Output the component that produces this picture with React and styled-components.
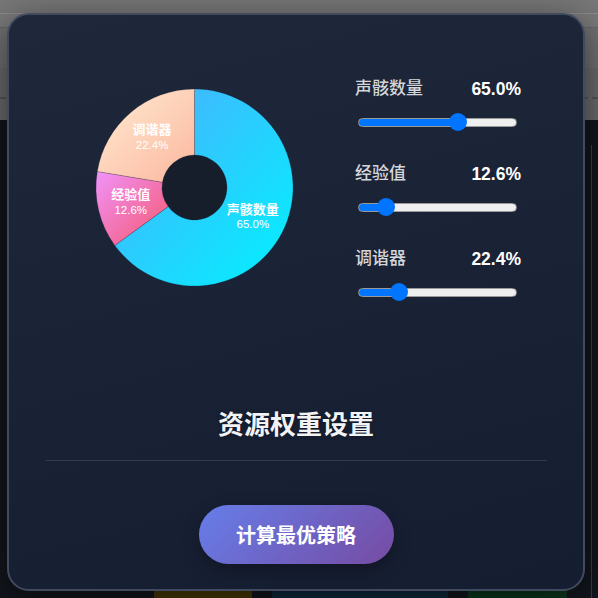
import React, { useState } from "react";
import styled, { createGlobalStyle } from "styled-components";

const Global = createGlobalStyle`
  html, body { margin: 0; padding: 0; background: #12171e; overflow: hidden; }
  * { box-sizing: border-box; }
`;

const FONT = `"Liberation Sans", "Noto Sans CJK SC", sans-serif`;

const Page = styled.div`
  position: relative;
  width: 598px;
  height: 598px;
  overflow: hidden;
  display: flex;
  flex-direction: column;
  font-family: ${FONT};
`;

const Header = styled.div`
  height: 120px;
  display: flex;
  flex-direction: column;
  background: #6c6c6c;
`;

const Strip = styled.div`
  height: ${(p) => p.$h}px;
  background: ${(p) => p.$bg};
  border-top: ${(p) => (p.$line ? `1px solid ${p.$line}` : "none")};
`;

const DashStrip = styled.div`
  flex: 1;
  padding-top: 29px;
  background: #6c6c6c;
`;

const Dashed = styled.div`
  border-top: 2px dashed #565656;
`;

const Body = styled.div`
  flex: 1;
  display: flex;
  background: #12171e;
`;

const Main = styled.div`
  flex: 1;
  display: flex;
  flex-direction: column;
  justify-content: flex-end;
`;

const Tabs = styled.div`
  display: flex;
  gap: 20px;
  padding-left: 154px;
  height: 8px;
`;

const Tab = styled.div`
  width: ${(p) => p.$w}px;
  background: ${(p) => p.$bg};
`;

const SideRail = styled.div`
  width: 7px;
  margin-top: 25px;
  border-left: 1px solid #3a3f45;
`;

const Modal = styled.div`
  position: absolute;
  left: 7px;
  top: 13px;
  width: 578px;
  height: 578px;
  border: 2px solid #414a5f;
  border-radius: 22px;
  background: linear-gradient(165deg, #1f273b 0%, #1a2236 50%, #151d31 100%);
  box-shadow: 0 10px 40px rgba(0, 0, 0, 0.55);
  display: flex;
  flex-direction: column;
  align-items: stretch;
`;

const TopSection = styled.div`
  display: flex;
  align-items: flex-start;
  padding: 62px 0 0 85px;
`;

const PieSvg = styled.svg`
  margin-top: 10px;
  flex: none;
  overflow: visible;
`;

const Sliders = styled.div`
  margin-left: 60px;
  width: 166px;
  display: flex;
  flex-direction: column;
  gap: 31px;
`;

const SliderRow = styled.div`
  display: flex;
  flex-direction: column;
`;

const LabelLine = styled.div`
  display: flex;
  justify-content: space-between;
  align-items: center;
  height: 24px;
`;

const SliderLabel = styled.span`
  font-size: 17px;
  font-weight: 500;
  color: #d4d6da;
  line-height: 24px;
`;

const SliderValue = styled.span`
  font-size: 17.5px;
  font-weight: 700;
  color: #ffffff;
  line-height: 24px;
`;

const Range = styled.input`
  -webkit-appearance: none;
  appearance: none;
  width: 159px;
  height: 18px;
  margin: 12px 0 0 3px;
  padding: 0;
  background: transparent;
  display: block;
  cursor: pointer;

  &::-webkit-slider-runnable-track {
    height: 9px;
    border-radius: 5px;
    border: 1px solid #9a9a9a;
    background: linear-gradient(
      to right,
      #0075ff 0,
      #0075ff var(--fill),
      #efefef var(--fill),
      #efefef 100%
    );
  }
  &::-webkit-slider-thumb {
    -webkit-appearance: none;
    appearance: none;
    width: 18px;
    height: 18px;
    border-radius: 50%;
    background: #0075ff;
    border: none;
    margin-top: -5.5px;
  }
  &:focus {
    outline: none;
  }
`;

const Title = styled.h2`
  margin: 108px 0 0;
  text-align: center;
  font-size: 26px;
  line-height: 32px;
  font-weight: 600;
  color: #f2f3f5;
  text-shadow: 0 1px 4px rgba(0, 0, 0, 0.35);
`;

const Divider = styled.div`
  margin: 19px 36px 0 37px;
  height: 1px;
  background: #323c50;
`;

const ButtonRow = styled.div`
  display: flex;
  justify-content: center;
  margin-top: 44px;
`;

const ActionButton = styled.button`
  width: 195px;
  height: 59px;
  border: none;
  border-radius: 30px;
  background: linear-gradient(135deg, #667eea 0%, #764ba2 100%);
  color: #ffffff;
  font-family: ${FONT};
  font-size: 20px;
  font-weight: 700;
  box-shadow: 0 6px 18px rgba(0, 0, 0, 0.3);
  cursor: pointer;
`;

const SliceName = styled.text`
  font-family: ${FONT};
  font-size: 13px;
  font-weight: 700;
  fill: #ffffff;
`;

const SliceValue = styled.text`
  font-family: ${FONT};
  font-size: 11.5px;
  fill: #ffffff;
`;

const INITIAL = [
  { key: "a", name: "声骸数量", value: 65.0, grad: ["#4facfe", "#00f2fe"] },
  { key: "b", name: "经验值", value: 12.6, grad: ["#f093fb", "#f5576c"] },
  { key: "c", name: "调谐器", value: 22.4, grad: ["#ffecd2", "#fcb69f"] },
];

const CX = 100.5;
const CY = 100.5;
const R = 98.5;
const RI = 32.5;

function pt(angle, rad) {
  return [CX + rad * Math.sin(angle), CY - rad * Math.cos(angle)];
}

function arcPath(a0, a1) {
  const large = a1 - a0 > Math.PI ? 1 : 0;
  const [x0, y0] = pt(a0, R);
  const [x1, y1] = pt(a1, R);
  const [x2, y2] = pt(a1, RI);
  const [x3, y3] = pt(a0, RI);
  return `M${x0} ${y0} A${R} ${R} 0 ${large} 1 ${x1} ${y1} L${x2} ${y2} A${RI} ${RI} 0 ${large} 0 ${x3} ${y3} Z`;
}

function Donut({ items }) {
  const total = items.reduce((s, d) => s + d.value, 0) || 1;
  let acc = 0;
  const slices = items.map((d) => {
    const a0 = (acc / total) * Math.PI * 2;
    acc += d.value;
    const a1 = (acc / total) * Math.PI * 2;
    const mid = (a0 + a1) / 2;
    const [lx, ly] = pt(mid, (R + RI) / 2);
    return { ...d, a0, a1, lx, ly, pct: (d.value / total) * 100 };
  });
  return (
    <PieSvg width="201" height="201" viewBox="0 0 201 201">
      <defs>
        {slices.map((s) => (
          <linearGradient key={s.key} id={`g-${s.key}`} x1="0" y1="0" x2="1" y2="1">
            <stop offset="0" stopColor={s.grad[0]} />
            <stop offset="1" stopColor={s.grad[1]} />
          </linearGradient>
        ))}
      </defs>
      <circle cx={CX} cy={CY} r={RI} fill="#161d2b" />
      {slices.map((s) => (
        <path
          key={s.key}
          d={arcPath(s.a0, s.a1)}
          fill={`url(#g-${s.key})`}
          stroke="rgba(20,28,45,0.35)"
          strokeWidth="0.6"
        />
      ))}
      {slices.map((s) => (
        <g key={`l-${s.key}`}>
          <SliceName x={s.lx} y={s.ly - 8} textAnchor="middle" dominantBaseline="central">
            {s.name}
          </SliceName>
          <SliceValue x={s.lx} y={s.ly + 7} textAnchor="middle" dominantBaseline="central">
            {s.pct.toFixed(1)}%
          </SliceValue>
        </g>
      ))}
    </PieSvg>
  );
}

export default function App() {
  const [items, setItems] = useState(INITIAL);
  const update = (key, v) =>
    setItems((prev) => prev.map((d) => (d.key === key ? { ...d, value: v } : d)));

  return (
    <>
      <Global />
      <Page>
        <Header>
          <Strip $h={13} $bg="#787878" />
          <Strip $h={14} $bg="#7a7a7a" $line="#8c8c8c" />
          <Strip $h={41} $bg="#717171" $line="#686868" />
          <DashStrip>
            <Dashed />
          </DashStrip>
        </Header>
        <Body>
          <Main>
            <Tabs>
              <Tab $w={98} $bg="#4a3b06" />
              <Tab $w={176} $bg="#0f2a3e" />
              <Tab $w={99} $bg="#0d3a1f" />
            </Tabs>
          </Main>
          <SideRail />
        </Body>

        <Modal>
          <TopSection>
            <Donut items={items} />
            <Sliders>
              {items.map((d) => {
                const fill = ((9 + 141 * (d.value / 100)) / 159) * 100;
                return (
                  <SliderRow key={d.key}>
                    <LabelLine>
                      <SliderLabel>{d.name}</SliderLabel>
                      <SliderValue>{d.value.toFixed(1)}%</SliderValue>
                    </LabelLine>
                    <Range
                      type="range"
                      min="0"
                      max="100"
                      step="0.1"
                      value={d.value}
                      onChange={(e) => update(d.key, parseFloat(e.target.value))}
                      style={{ "--fill": `${fill}%` }}
                    />
                  </SliderRow>
                );
              })}
            </Sliders>
          </TopSection>
          <Title>资源权重设置</Title>
          <Divider />
          <ButtonRow>
            <ActionButton>计算最优策略</ActionButton>
          </ButtonRow>
        </Modal>
      </Page>
    </>
  );
}
